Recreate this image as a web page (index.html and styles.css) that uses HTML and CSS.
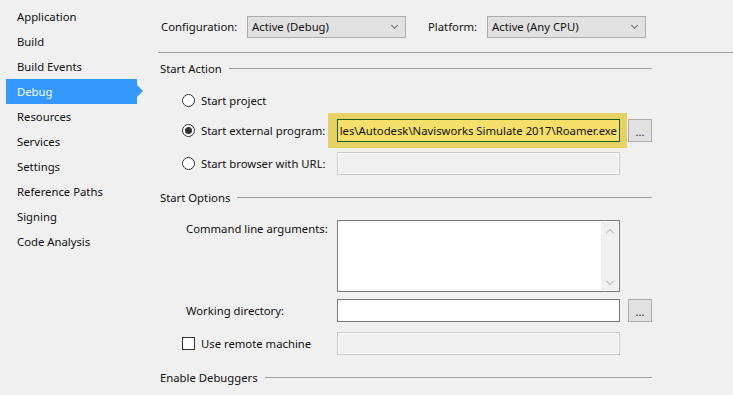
FILE: index.html
```html
<!DOCTYPE html>
<html lang="en">
<head>
    <meta charset="UTF-8">
    <meta name="viewport" content="width=device-width, initial-scale=1.0">
    <title>Debug - Project Properties</title>
    <link rel="stylesheet" href="styles.css">
</head>
<body>
    <div class="props">
        <ul class="nav">
            <li>Application</li>
            <li>Build</li>
            <li>Build Events</li>
            <li class="active">Debug</li>
            <li>Resources</li>
            <li>Services</li>
            <li>Settings</li>
            <li>Reference Paths</li>
            <li>Signing</li>
            <li>Code Analysis</li>
        </ul>

        <div class="page">
            <div class="toolbar">
                <span class="tb-label">Configuration:</span>
                <div class="select">Active (Debug)<span class="chev"></span></div>
                <span class="tb-label platform">Platform:</span>
                <div class="select">Active (Any CPU)<span class="chev"></span></div>
            </div>

            <div class="section">
                <div class="section-title">Start Action</div>

                <div class="row first">
                    <label class="option"><span class="radio"></span>Start project</label>
                </div>
                <div class="row">
                    <label class="option"><span class="radio checked"></span>Start external program:</label>
                    <div class="highlight">
                        <div class="input path"><span>les\Autodesk\Navisworks Simulate 2017\Roamer.exe</span></div>
                    </div>
                    <button class="browse">...</button>
                </div>
                <div class="row">
                    <label class="option"><span class="radio"></span>Start browser with URL:</label>
                    <div class="input disabled"></div>
                </div>
            </div>

            <div class="section">
                <div class="section-title">Start Options</div>

                <div class="row args">
                    <span class="field-label">Command line arguments:</span>
                    <div class="input textarea">
                        <div class="scrollbar">
                            <span class="arrow up"></span>
                            <span class="arrow down"></span>
                        </div>
                    </div>
                </div>
                <div class="row">
                    <span class="field-label">Working directory:</span>
                    <div class="input"></div>
                    <button class="browse">...</button>
                </div>
                <div class="row">
                    <label class="option"><span class="checkbox"></span>Use remote machine</label>
                    <div class="input disabled"></div>
                </div>
            </div>

            <div class="section">
                <div class="section-title">Enable Debuggers</div>
            </div>
        </div>
    </div>
</body>
</html>
```

FILE: styles.css
```css
* {
    margin: 0;
    padding: 0;
    box-sizing: border-box;
}

body {
    font-family: 'Noto Sans', 'Segoe UI', sans-serif;
    font-size: 11.3px;
    color: #111;
    background: #f0f0f0;
    width: 733px;
    height: 395px;
    overflow: hidden;
}

.props {
    display: flex;
    height: 100%;
}

/* left navigation */
.nav {
    list-style: none;
    width: 150px;
    flex-shrink: 0;
    padding: 4px 0 0 6px;
}

.nav li {
    height: 25px;
    line-height: 25px;
    padding-left: 11px;
    width: 131px;
    position: relative;
}

.nav li.active {
    background: #3399ff;
    color: #fff;
}

.nav li.active::after {
    content: '';
    position: absolute;
    right: -6px;
    top: 6px;
    border-left: 6px solid #3399ff;
    border-top: 6px solid transparent;
    border-bottom: 6px solid transparent;
}

/* right page */
.page {
    flex: 1;
    padding-left: 8px;
}

.toolbar {
    display: flex;
    align-items: center;
    height: 53px;
    padding: 16px 0 15px 3px;
    border-bottom: 1px solid #a0a0a0;
}

.tb-label {
    width: 86px;
}

.tb-label.platform {
    width: 59px;
    margin-left: 22px;
}

.select {
    width: 159px;
    height: 22px;
    line-height: 20px;
    padding-left: 4px;
    background: #e1e1e1;
    border: 1px solid #adadad;
    position: relative;
}

.chev {
    position: absolute;
    right: 8px;
    top: 6px;
    width: 5px;
    height: 5px;
    border-right: 1px solid #707070;
    border-bottom: 1px solid #707070;
    transform: rotate(45deg);
}

.section {
    width: 494px;
}

.section-title {
    display: flex;
    align-items: center;
    gap: 7px;
    padding-left: 2px;
    height: 16px;
    margin-top: 7px;
}

.section-title::after {
    content: '';
    flex: 1;
    border-top: 1px solid #a0a0a0;
}

.row {
    display: flex;
    align-items: center;
    padding-left: 24px;
    margin-top: 10px;
    height: 23px;
}

.row.first {
    margin-top: 16px;
    height: 17px;
}

.section:nth-child(3) .row:nth-child(3) {
    margin-top: 7px;
}

.section:nth-child(3) .section-title,
.section:nth-child(4) .section-title {
    margin-top: 14px;
}

.option {
    display: flex;
    align-items: center;
    width: 155px;
    height: 100%;
}

.field-label {
    width: 155px;
    padding-left: 4px;
}

.radio {
    width: 13px;
    height: 13px;
    border: 1px solid #333;
    border-radius: 50%;
    background: #fff;
    margin-right: 6px;
    position: relative;
}

.radio.checked::after {
    content: '';
    position: absolute;
    left: 2px;
    top: 2px;
    width: 7px;
    height: 7px;
    border-radius: 50%;
    background: #333;
}

.checkbox {
    width: 13px;
    height: 13px;
    border: 1px solid #333;
    background: #fff;
    margin-right: 6px;
}

.input {
    width: 283px;
    height: 23px;
    background: #fff;
    border: 1px solid #7a7a7a;
}

.input.disabled {
    background: #f0f0f0;
    border: 1px solid #cccccc;
    box-shadow: inset 0 0 0 1px #fff;
}

.highlight {
    background: #e6d165;
    padding: 6px 7px 6px 9px;
    margin: -6px -7px -6px -9px;
}

.input.path {
    background: #f6df6b;
    border-color: #1e5c1e;
    display: flex;
    justify-content: flex-end;
    align-items: center;
    overflow: hidden;
    white-space: nowrap;
    padding-right: 2px;
    color: #111;
}

.browse {
    width: 24px;
    height: 23px;
    margin-left: 8px;
    padding-top: 3px;
    background: #e1e1e1;
    border: 1px solid #adadad;
    font-family: inherit;
    font-size: 11px;
    line-height: 12px;
    color: #222;
}

.row.args {
    align-items: flex-start;
    height: 72px;
    margin-top: 15px;
}

.row.args .field-label {
    padding-top: 1px;
}

.input.textarea {
    height: 72px;
    display: flex;
    justify-content: flex-end;
    padding: 1px;
}

.scrollbar {
    width: 17px;
    background: #f0f0f0;
    display: flex;
    flex-direction: column;
    justify-content: space-between;
    align-items: center;
    padding: 8px 0 6px;
}

.arrow {
    width: 6px;
    height: 6px;
    border-left: 1px solid #c2c2c2;
    border-top: 1px solid #c2c2c2;
}

.arrow.up {
    transform: rotate(45deg);
}

.arrow.down {
    transform: rotate(-135deg);
}
```
